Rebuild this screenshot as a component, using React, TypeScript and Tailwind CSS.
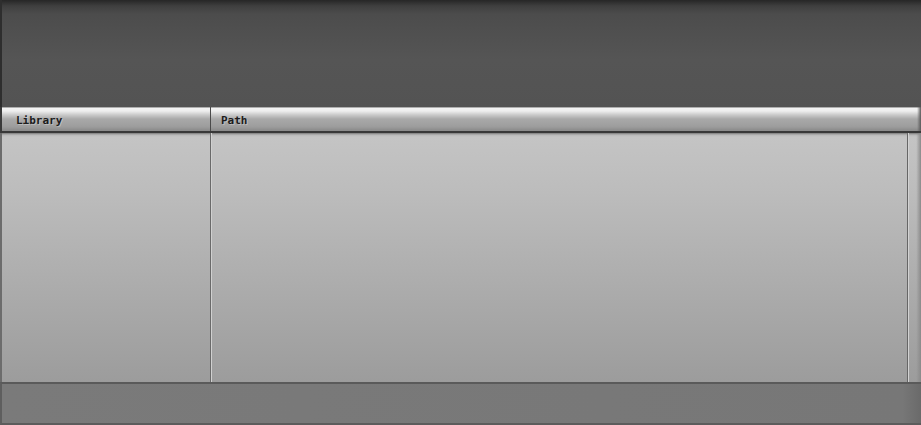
import React from "react";

function HeaderCell({ label, className }: { label: string; className?: string }) {
  return (
    <div className={`flex items-center pt-[3px] h-full ${className ?? ""}`}>
      <span
        className="text-[11px] font-bold leading-none text-[#1c1c1c] [text-shadow:1px_1px_0_rgba(255,255,255,0.3)]"
        style={{ fontFamily: '"DejaVu Sans Mono", "Liberation Mono", monospace' }}
      >
        {label}
      </span>
    </div>
  );
}

export default function App() {
  return (
    <div className="w-[921px] h-[425px] flex flex-col bg-[#525252] overflow-hidden">
      {/* toolbar area */}
      <div className="h-[107px] shrink-0 border-l-2 border-[#2e2e2e] bg-[linear-gradient(to_bottom,#262626_0px,#3f3f3f_6px,#4c4c4c_14px,#555555_60px,#535353_100%)]" />

      {/* column header */}
      <div className="h-[26px] shrink-0 flex border-l-2 border-[#3a3a3a] border-b-2 border-b-[#383838] bg-[linear-gradient(to_bottom,#6a6a6a_0px,#f4f4f4_1px,#eeeeee_4px,#c9c9c9_8px,#a9a9a9_12px,#a3a3a3_16px,#9c9c9c_20px,#8c8c8c_23px)]">
        <HeaderCell label="Library" className="w-[209px] pl-[14px] border-r border-[#4a4a4a]" />
        <HeaderCell label="Path" className="flex-1 pl-[10px]" />
        <div className="w-[4px] bg-[linear-gradient(to_right,transparent,#5a5a5a)]" />
      </div>

      {/* rows */}
      <div className="flex-1 flex border-l-2 border-[#6c6c6c] bg-[linear-gradient(to_bottom,#7a7a7a_0px,#b8b8b8_2px,#c4c4c4_4px,#bcbcbc_60px,#ababab_160px,#9c9c9c_100%)]">
        <div className="w-[209px] border-r border-[#6a6a6a]" />
        <div className="flex-1 border-l border-[#d0d0d0] border-r border-r-[#666666]" />
        <div className="w-[13px] border-l border-[#d2d2d2] bg-[linear-gradient(to_right,transparent_60%,#8a8a8a)]" />
      </div>

      {/* status bar */}
      <div className="h-[43px] shrink-0 border-t-2 border-[#5a5a5a] border-l-2 border-l-[#5e5e5e] border-b-2 border-b-[#5c5c5c] bg-[linear-gradient(to_right,#7a7a7a_0%,#777777_98%,#6a6a6a_100%)]" />
    </div>
  );
}
